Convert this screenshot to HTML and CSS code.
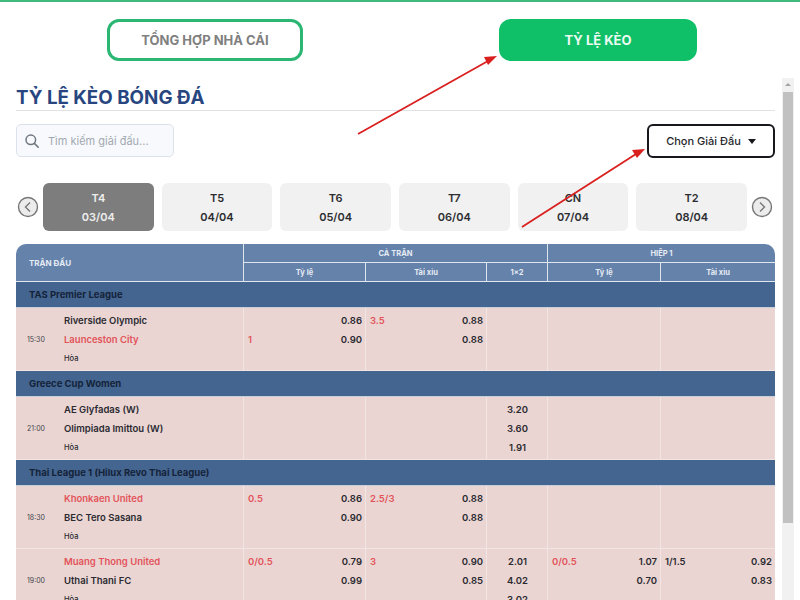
FILE: index.html
```html
<!DOCTYPE html>
<html lang="vi">
<head>
    <meta charset="UTF-8">
    <meta name="viewport" content="width=device-width, initial-scale=1.0">
    <title>Tỷ lệ kèo bóng đá</title>
    <link rel="stylesheet" href="styles.css">
</head>
<body>
    <div class="tabs">
        <a class="tab tab-outline">TỔNG HỢP NHÀ CÁI</a>
        <a class="tab tab-active">TỶ LỆ KÈO</a>
    </div>

    <div class="content">
        <h1 class="title">TỶ LỆ KÈO BÓNG ĐÁ</h1>

        <div class="filters">
            <div class="search">
                <svg class="search-icon" viewBox="0 0 16 16" width="16" height="16">
                    <circle cx="6.8" cy="6.8" r="4.8" fill="none" stroke="#6f7780" stroke-width="1.5"/>
                    <path d="M10.4 10.4 L14.2 14.2" stroke="#6f7780" stroke-width="1.6" stroke-linecap="round"/>
                </svg>
                <span>Tìm kiếm giải đấu...</span>
            </div>
            <div class="league-select">
                <span>Chọn Giải Đấu</span>
                <i class="caret"></i>
            </div>
        </div>

        <div class="dates">
            <svg class="date-nav" viewBox="0 0 22 22" width="22" height="22">
                <circle cx="11" cy="11" r="9.5" fill="#ececec" stroke="#777" stroke-width="1.4"/>
                <path d="M13 6.5 L8.5 11 L13 15.5" fill="none" stroke="#777" stroke-width="1.4"/>
            </svg>
            <div class="date-list">
                <div class="date date-active"><b>T4</b><b>03/04</b></div>
                <div class="date"><b>T5</b><b>04/04</b></div>
                <div class="date"><b>T6</b><b>05/04</b></div>
                <div class="date"><b>T7</b><b>06/04</b></div>
                <div class="date"><b>CN</b><b>07/04</b></div>
                <div class="date"><b>T2</b><b>08/04</b></div>
            </div>
            <svg class="date-nav" viewBox="0 0 22 22" width="22" height="22">
                <circle cx="11" cy="11" r="9.5" fill="#ececec" stroke="#777" stroke-width="1.4"/>
                <path d="M9 6.5 L13.5 11 L9 15.5" fill="none" stroke="#777" stroke-width="1.4"/>
            </svg>
        </div>

        <table class="odds">
            <colgroup>
                <col class="col-match">
                <col class="col-rate">
                <col class="col-total">
                <col class="col-x">
                <col class="col-half-rate">
                <col class="col-half-total">
            </colgroup>
            <thead>
                <tr class="head-top">
                    <th rowspan="2" class="head-match">TRẬN ĐẤU</th>
                    <th colspan="3">CẢ TRẬN</th>
                    <th colspan="2" class="head-half">HIỆP 1</th>
                </tr>
                <tr class="head-sub">
                    <th>Tỷ lệ</th>
                    <th>Tài xỉu</th>
                    <th>1×2</th>
                    <th>Tỷ lệ</th>
                    <th>Tài xỉu</th>
                </tr>
            </thead>
            <tbody>
                <tr class="league"><td colspan="6">TAS Premier League</td></tr>
                <tr class="match">
                    <td>
                        <div class="teams">
                            <span class="time">15:30</span>
                            <div class="names">
                                <div class="line">Riverside Olympic</div>
                                <div class="line red">Launceston City</div>
                                <div class="line draw">Hòa</div>
                            </div>
                        </div>
                    </td>
                    <td>
                        <div class="line"><span></span><span>0.86</span></div>
                        <div class="line"><span class="red">1</span><span>0.90</span></div>
                    </td>
                    <td>
                        <div class="line"><span class="red">3.5</span><span>0.88</span></div>
                        <div class="line"><span></span><span>0.88</span></div>
                    </td>
                    <td></td>
                    <td></td>
                    <td></td>
                </tr>

                <tr class="league"><td colspan="6">Greece Cup Women</td></tr>
                <tr class="match">
                    <td>
                        <div class="teams">
                            <span class="time">21:00</span>
                            <div class="names">
                                <div class="line">AE Glyfadas (W)</div>
                                <div class="line">Olimpiada Imittou (W)</div>
                                <div class="line draw">Hòa</div>
                            </div>
                        </div>
                    </td>
                    <td></td>
                    <td></td>
                    <td class="center">
                        <div class="line">3.20</div>
                        <div class="line">3.60</div>
                        <div class="line">1.91</div>
                    </td>
                    <td></td>
                    <td></td>
                </tr>

                <tr class="league"><td colspan="6">Thai League 1 (Hilux Revo Thai League)</td></tr>
                <tr class="match">
                    <td>
                        <div class="teams">
                            <span class="time">18:30</span>
                            <div class="names">
                                <div class="line red">Khonkaen United</div>
                                <div class="line">BEC Tero Sasana</div>
                                <div class="line draw">Hòa</div>
                            </div>
                        </div>
                    </td>
                    <td>
                        <div class="line"><span class="red">0.5</span><span>0.86</span></div>
                        <div class="line"><span></span><span>0.90</span></div>
                    </td>
                    <td>
                        <div class="line"><span class="red">2.5/3</span><span>0.88</span></div>
                        <div class="line"><span></span><span>0.88</span></div>
                    </td>
                    <td></td>
                    <td></td>
                    <td></td>
                </tr>
                <tr class="match">
                    <td>
                        <div class="teams">
                            <span class="time">19:00</span>
                            <div class="names">
                                <div class="line red">Muang Thong United</div>
                                <div class="line">Uthai Thani FC</div>
                                <div class="line draw">Hòa</div>
                            </div>
                        </div>
                    </td>
                    <td>
                        <div class="line"><span class="red">0/0.5</span><span>0.79</span></div>
                        <div class="line"><span></span><span>0.99</span></div>
                    </td>
                    <td>
                        <div class="line"><span class="red">3</span><span>0.90</span></div>
                        <div class="line"><span></span><span>0.85</span></div>
                    </td>
                    <td class="center">
                        <div class="line">2.01</div>
                        <div class="line">4.02</div>
                        <div class="line">3.02</div>
                    </td>
                    <td>
                        <div class="line"><span class="red">0/0.5</span><span>1.07</span></div>
                        <div class="line"><span></span><span>0.70</span></div>
                    </td>
                    <td>
                        <div class="line"><span>1/1.5</span><span>0.92</span></div>
                        <div class="line"><span></span><span>0.83</span></div>
                    </td>
                </tr>
            </tbody>
        </table>
    </div>

    <!-- fake scrollbar of the inner panel -->
    <div class="scrollbar">
        <i class="scroll-up"></i>
        <div class="scroll-thumb"></div>
    </div>

    <!-- red annotation arrows drawn over the page -->
    <svg class="arrows" viewBox="0 0 800 600" width="800" height="600">
        <path d="M358 134 L488 61" stroke="#d9201f" stroke-width="1.8" fill="none"/>
        <path d="M497 56 L484 57 L488 65 Z" fill="#d9201f"/>
        <path d="M522 227 L636 154" stroke="#d9201f" stroke-width="1.8" fill="none"/>
        <path d="M645 149 L632 150 L637 158 Z" fill="#d9201f"/>
    </svg>
</body>
</html>
```

FILE: styles.css
```css
html, body {
    height: 100%;
}

body {
    margin: 0;
    height: 600px;
    overflow: hidden;
    position: relative;
    background-color: #ffffff;
    border-top: 2px solid #3fb97c;
    box-sizing: border-box;
    font-family: Inter, "Noto Sans", sans-serif;
    color: #26262b;
}

/* Top tabs */
.tabs {
    display: flex;
    gap: 196px;
    padding: 17px 0 0 107px;
}

.tab {
    width: 196px;
    height: 42px;
    box-sizing: border-box;
    border-radius: 12px;
    display: flex;
    align-items: center;
    justify-content: center;
    font-size: 13px;
    font-weight: 700;
}

.tab-outline {
    border: 3px solid #2bb673;
    color: #808080;
}

.tab-active {
    width: 198px;
    background-color: #10c068;
    color: #ecfbf2;
}

.content {
    padding: 0 25px 0 16px;
}

.title {
    margin: 25px 0 0;
    height: 24px;
    border-bottom: 1px solid #dfe3e6;
    font-size: 18.8px;
    line-height: 23px;
    font-weight: 700;
    color: #27467f;
}

/* Search + league select */
.filters {
    display: flex;
    justify-content: space-between;
    align-items: flex-start;
    margin-top: 13px;
}

.search {
    width: 158px;
    height: 33px;
    box-sizing: border-box;
    display: flex;
    align-items: center;
    gap: 8px;
    padding-left: 7px;
    background-color: #f7f9fc;
    border: 1px solid #dce2ea;
    border-radius: 5px;
    font-size: 11px;
    color: #a3a9b2;
}

.search-icon {
    flex-shrink: 0;
}

.league-select {
    width: 128px;
    height: 34px;
    box-sizing: border-box;
    display: flex;
    align-items: center;
    justify-content: center;
    gap: 7px;
    background-color: #ffffff;
    border: 2px solid #17171c;
    border-radius: 6px;
    font-size: 11px;
    font-weight: 500;
}

.caret {
    width: 0;
    height: 0;
    border-left: 4.5px solid transparent;
    border-right: 4.5px solid transparent;
    border-top: 5px solid #17171c;
}

/* Date strip */
.dates {
    display: flex;
    align-items: center;
    gap: 4px;
    margin-top: 25px;
    padding-left: 1px;
    height: 48px;
}

.date-nav {
    flex-shrink: 0;
}

.date-list {
    width: 704px;
    flex-shrink: 0;
    display: grid;
    grid-template-columns: repeat(6, 1fr);
    gap: 8px;
}

.date {
    height: 48px;
    box-sizing: border-box;
    padding-top: 2px;
    display: flex;
    flex-direction: column;
    align-items: center;
    justify-content: center;
    gap: 6px;
    background-color: #f1f1f1;
    border-radius: 6px;
    font-size: 11px;
    line-height: 13px;
    color: #2c2c30;
}

.date b {
    font-weight: 600;
}

.date-active {
    background-color: #7d7d7d;
    color: #eeeeee;
}

/* Odds table */
.odds {
    width: 759px;
    margin-top: 13px;
    table-layout: fixed;
    border-collapse: separate;
    border-spacing: 0;
}

.col-match { width: 227px; }
.col-rate { width: 122px; }
.col-total { width: 121px; }
.col-x { width: 61px; }
.col-half-rate { width: 113px; }
.col-half-total { width: 115px; }

.odds th {
    background-color: #6582ab;
    color: #e6ecf4;
    font-size: 7.5px;
    font-weight: 700;
    padding: 0;
    border-left: 1px solid #dfe6ef;
    border-bottom: 1px solid #dfe6ef;
}

.head-top th {
    height: 18px;
}

.head-sub th {
    height: 18px;
}

.odds .head-match {
    border-left: 0;
    border-top-left-radius: 10px;
    text-align: left;
    padding-left: 13px;
    font-size: 8px;
}

.head-half {
    border-top-right-radius: 10px;
}

.league td {
    height: 25px;
    padding: 0 0 0 13px;
    background-color: #44658f;
    border-bottom: 1px solid #c7cfdb;
    font-size: 9.5px;
    font-weight: 700;
    color: #14233a;
}

.match td {
    height: 63px;
    padding: 3px 3px 0 4px;
    box-sizing: border-box;
    vertical-align: top;
    background-color: #ead5d3;
    border-left: 1px solid #f2e6e4;
    border-bottom: 1px solid #f2e6e4;
    font-size: 9.5px;
    font-weight: 600;
}

.match td:first-child {
    border-left: 0;
    padding-left: 11px;
}

.line {
    height: 19px;
    line-height: 19px;
    display: flex;
    justify-content: space-between;
    white-space: nowrap;
    color: #2b2a30;
}

.center .line {
    justify-content: center;
}

.teams {
    display: flex;
    align-items: center;
}

.time {
    width: 37px;
    flex-shrink: 0;
    font-size: 7px;
    font-weight: 400;
    color: #45454a;
}

.names .line {
    font-size: 9.5px;
}

.odds .red {
    color: #e2545a;
}

.odds .draw {
    font-size: 7.5px;
    font-weight: 500;
}

/* Scrollbar */
.scrollbar {
    position: absolute;
    left: 782px;
    top: 76px;
    bottom: 0;
    width: 12px;
    background-color: #f1f1f1;
}

.scroll-up {
    display: block;
    width: 0;
    height: 0;
    margin: 5px auto 0;
    border-left: 3px solid transparent;
    border-right: 3px solid transparent;
    border-bottom: 3px solid #a3a3a3;
}

.scroll-thumb {
    margin: 6px 1px 0;
    height: 431px;
    background-color: #c1c1c1;
}

.arrows {
    position: absolute;
    left: 0;
    top: -2px;
    pointer-events: none;
}
```
